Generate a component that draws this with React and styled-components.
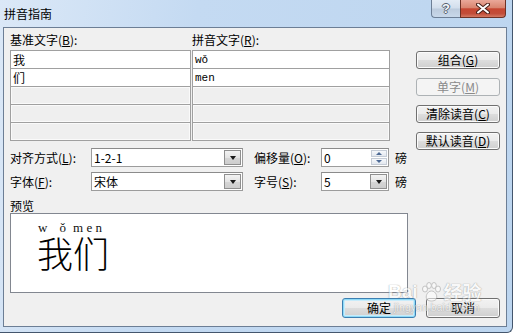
import React from "react";
import styled, { createGlobalStyle } from "styled-components";

const GlobalStyle = createGlobalStyle`
  html, body { margin: 0; padding: 0; background: #fff; }
  body {
    font-family: "Noto Sans CJK SC", "Liberation Sans", sans-serif;
    font-size: 12px;
    color: #000;
  }
  * { box-sizing: border-box; }
`;

const UI_FONT = `"Noto Sans CJK SC", "Liberation Sans", sans-serif`;

/* ── window chrome ─────────────────────────────────────────────── */
const Window = styled.div`
  position: relative;
  width: 513px;
  height: 333px;
  display: flex;
  flex-direction: column;
  padding: 0 5px 5px 3px;
  background: linear-gradient(100deg, #dbe8f7 0%, #c4daf2 35%, #bcd5ef 100%);
  border-right: 1px solid #44566d;
  border-bottom: 1px solid #44566d;
  border-bottom-right-radius: 6px;
`;

const TitleBar = styled.div`
  height: 27px;
  display: flex;
  align-items: flex-start;
`;

const Title = styled.div`
  align-self: center;
  padding-left: 1px;
  font-size: 12px;
  line-height: 16px;
  color: #000;
`;

const CaptionButtons = styled.div`
  margin-left: auto;
  margin-right: 1px;
  display: flex;
  height: 18px;
`;

const HelpButton = styled.div`
  width: 29px;
  height: 18px;
  border: 1px solid #6d7f96;
  border-top: none;
  border-right: none;
  border-bottom-left-radius: 4px;
  background: linear-gradient(#e3ebf5 0%, #d2deec 48%, #bccbdd 52%, #c8d8ea 100%);
  display: flex;
  align-items: center;
  justify-content: center;
  font: bold 13px/1 "Liberation Sans", sans-serif;
  color: #f4f7fb;
  text-shadow: 1px 0 #56606e, -1px 0 #56606e, 0 1px #56606e, 0 -1px #56606e;
`;

const CloseButton = styled.div`
  width: 46px;
  height: 18px;
  border: 1px solid #6e3226;
  border-top: none;
  border-bottom-right-radius: 4px;
  background: linear-gradient(#eaa899 0%, #d98570 45%, #c64631 52%, #c24d39 80%, #d37a64 100%);
  display: flex;
  align-items: center;
  justify-content: center;
`;

const Client = styled.div`
  flex: 1;
  display: flex;
  flex-direction: column;
  background: #f0f0f0;
  border: 1px solid #6c7e95;
  padding: 2px 6px 0 6px;
`;

/* ── main layout ───────────────────────────────────────────────── */
const Main = styled.div`
  display: grid;
  grid-template-columns: 400px 84px;
  column-gap: 6px;
`;

const LeftPane = styled.div`
  display: flex;
  flex-direction: column;
`;

const HeaderRow = styled.div`
  display: grid;
  grid-template-columns: 182px 1fr;
  height: 20px;
  align-items: center;
  line-height: 16px;
`;

const Table = styled.div`
  display: grid;
  grid-template-columns: 181px 198px;
  column-gap: 1px;
`;

const TableCol = styled.div`
  border: 1px solid #a0a0a0;
  display: flex;
  flex-direction: column;
`;

const Cell = styled.div`
  height: ${(p) => (p.$first ? 17 : 18)}px;
  border-top: ${(p) => (p.$first ? "none" : "1px solid #a0a0a0")};
  background: ${(p) => (p.$empty ? "#efefef" : "#fff")};
  box-shadow: ${(p) => (p.$empty ? "inset 0 0 0 1px #fafafa" : "none")};
  padding-left: 2px;
  display: flex;
  align-items: center;
  font-family: ${(p) => (p.$latin ? `"Liberation Mono", monospace` : UI_FONT)};
  font-size: ${(p) => (p.$latin ? 11 : 12)}px;
  line-height: 16px;
`;

const Controls = styled.div`
  margin-top: 7px;
  display: grid;
  grid-template-columns: 81px 152px 78px 68px auto;
  grid-auto-rows: 19px;
  row-gap: 5px;
  align-items: center;
  line-height: 16px;
`;

const Label = styled.div`
  padding-left: ${(p) => p.$indent || 0}px;
  white-space: nowrap;
`;

const Unit = styled.div`
  padding-left: 6px;
`;

const Field = styled.div`
  height: 19px;
  display: flex;
  background: #fff;
  border: 1px solid #9c9c9c;
  border-top-color: #8b8b8b;
`;

const FieldText = styled.div`
  flex: 1;
  padding-left: 2px;
  line-height: 17px;
  font-size: 12px;
`;

const DropButton = styled.div`
  width: 17px;
  margin: 1px;
  border: 1px solid #8f8f8f;
  background: linear-gradient(#f3f3f3 0%, #e4e4e4 50%, #d6d6d6 51%, #cdcdcd 100%);
  display: flex;
  align-items: center;
  justify-content: center;

  &::after {
    content: "";
    border-left: 3.5px solid transparent;
    border-right: 3.5px solid transparent;
    border-top: 4px solid #1a1a1a;
    margin-top: 1px;
  }
`;

const SpinBox = styled.div`
  width: 16px;
  margin: 1px;
  display: flex;
  flex-direction: column;
  gap: 1px;
`;

const SpinHalf = styled.div`
  flex: 1;
  background: linear-gradient(#f6f8fb, #e3e8ef);
  border: 1px solid #c5ccd6;
  display: flex;
  align-items: center;
  justify-content: center;

  &::after {
    content: "";
    border-left: 3px solid transparent;
    border-right: 3px solid transparent;
    ${(p) => (p.$up ? "border-bottom: 3px solid #4d6a95;" : "border-top: 3px solid #4d6a95;")}
  }
`;

const PreviewLabel = styled.div`
  height: 22px;
  padding-top: 6px;
  line-height: 17px;
`;

const PreviewBox = styled.div`
  width: 398px;
  height: 80px;
  background: #fff;
  border: 1px solid #828790;
  padding: 8px 0 0 26px;
  display: flex;
  align-items: flex-start;
`;

const RubyUnit = styled.div`
  width: 36px;
  display: flex;
  flex-direction: column;
`;

const Pinyin = styled.div`
  height: 12px;
  display: flex;
  justify-content: space-between;
  padding: 0 ${(p) => p.$pr}px 0 ${(p) => p.$pl}px;
  font: 13px/12px "Liberation Serif", serif;
  color: #111;
`;

const Han = styled.div`
  height: 36px;
  font-size: 36px;
  line-height: 36px;
  font-weight: 300;
  color: #000;
`;

const SideButtons = styled.div`
  padding-top: 21px;
  display: flex;
  flex-direction: column;
  gap: 9px;
`;

const Button = styled.button`
  width: ${(p) => p.$w}px;
  height: ${(p) => p.$h}px;
  padding: 0;
  border: 1px solid ${(p) => (p.$primary ? "#3c7fb1" : "#707070")};
  border-radius: 3px;
  background: linear-gradient(#f2f2f2 0%, #ebebeb 48%, #dddddd 52%, #cfcfcf 100%);
  box-shadow: ${(p) =>
    p.$primary ? "inset 0 0 0 1px #8fdaf7, inset 0 0 0 2px #c8ecfb" : "inset 0 0 0 1px #fbfbfb"};
  font-family: ${UI_FONT};
  font-size: 12px;
  line-height: 14px;
  color: #000;

  &:disabled {
    border-color: #adb2b5;
    background: #f4f4f4;
    color: #8a8a8a;
    box-shadow: none;
  }
`;

const Footer = styled.div`
  margin-top: 5px;
  display: flex;
  justify-content: flex-end;
  gap: 10px;
`;

/* ── baidu watermark laid over the corner ──────────────────────── */
const Watermark = styled.div`
  position: absolute;
  left: 388px;
  top: 282px;
  opacity: 0.55;
  pointer-events: none;
  display: flex;
  flex-direction: column;
  align-items: flex-start;
  color: #fff;
  text-shadow: 0 0 1px #777, 0 0 1px #777;
`;

const MarkTop = styled.div`
  display: flex;
  align-items: flex-end;
  gap: 2px;
  font: bold 19px/20px "Liberation Sans", sans-serif;
`;

const MarkHan = styled.span`
  font-family: ${UI_FONT};
`;

const MarkSub = styled.div`
  margin-left: 6px;
  font: 10px/11px "Liberation Sans", sans-serif;
  letter-spacing: 0.3px;
`;

const Acc = ({ k }) => (
  <>
    (<u>{k}</u>)
  </>
);

const Combo = ({ value }) => (
  <Field>
    <FieldText>{value}</FieldText>
    <DropButton />
  </Field>
);

const Spinner = ({ value }) => (
  <Field>
    <FieldText>{value}</FieldText>
    <SpinBox>
      <SpinHalf $up />
      <SpinHalf />
    </SpinBox>
  </Field>
);

const baseRows = ["我", "们", "", "", ""];
const rubyRows = ["wǒ", "men", "", "", ""];

export default function App() {
  return (
    <>
      <GlobalStyle />
      <Window>
        <TitleBar>
          <Title>拼音指南</Title>
          <CaptionButtons>
            <HelpButton>?</HelpButton>
            <CloseButton>
              <svg width="14" height="11" viewBox="0 0 14 11">
                <path d="M2 1.5 L12 9.5 M12 1.5 L2 9.5" stroke="#4a2019" strokeWidth="4" strokeLinecap="round" />
                <path d="M2 1.5 L12 9.5 M12 1.5 L2 9.5" stroke="#fff" strokeWidth="2" strokeLinecap="round" />
              </svg>
            </CloseButton>
          </CaptionButtons>
        </TitleBar>

        <Client>
          <Main>
            <LeftPane>
              <HeaderRow>
                <Label>
                  基准文字<Acc k="B" />:
                </Label>
                <Label>
                  拼音文字<Acc k="R" />:
                </Label>
              </HeaderRow>
              <Table>
                <TableCol>
                  {baseRows.map((t, i) => (
                    <Cell key={i} $first={i === 0} $empty={!t}>
                      {t}
                    </Cell>
                  ))}
                </TableCol>
                <TableCol>
                  {rubyRows.map((t, i) => (
                    <Cell key={i} $first={i === 0} $empty={!t} $latin>
                      {t}
                    </Cell>
                  ))}
                </TableCol>
              </Table>

              <Controls>
                <Label>
                  对齐方式<Acc k="L" />:
                </Label>
                <Combo value="1-2-1" />
                <Label $indent={11}>
                  偏移量<Acc k="O" />:
                </Label>
                <Spinner value="0" />
                <Unit>磅</Unit>

                <Label>
                  字体<Acc k="F" />:
                </Label>
                <Combo value="宋体" />
                <Label $indent={11}>
                  字号<Acc k="S" />:
                </Label>
                <Combo value="5" />
                <Unit>磅</Unit>
              </Controls>

              <PreviewLabel>预览</PreviewLabel>
              <PreviewBox>
                <RubyUnit>
                  <Pinyin $pl={1} $pr={7}>
                    <span>w</span>
                    <span>ǒ</span>
                  </Pinyin>
                  <Han>我</Han>
                </RubyUnit>
                <RubyUnit>
                  <Pinyin $pl={0} $pr={7}>
                    <span>m</span>
                    <span>e</span>
                    <span>n</span>
                  </Pinyin>
                  <Han>们</Han>
                </RubyUnit>
              </PreviewBox>
            </LeftPane>

            <SideButtons>
              <Button $w={84} $h={18}>
                组合<Acc k="G" />
              </Button>
              <Button $w={84} $h={18} disabled>
                单字<Acc k="M" />
              </Button>
              <Button $w={84} $h={18}>
                清除读音<Acc k="C" />
              </Button>
              <Button $w={84} $h={18}>
                默认读音<Acc k="D" />
              </Button>
            </SideButtons>
          </Main>

          <Footer>
            <Button $w={74} $h={20} $primary>
              确定
            </Button>
            <Button $w={74} $h={20}>
              取消
            </Button>
          </Footer>
        </Client>

        <Watermark>
          <MarkTop>
            <span>Bai</span>
            <svg width="22" height="20" viewBox="0 0 22 20">
              <g fill="#fff" stroke="#888" strokeWidth="0.8">
                <ellipse cx="5" cy="7" rx="2.5" ry="3" />
                <ellipse cx="9" cy="3.5" rx="2.3" ry="3" />
                <ellipse cx="14" cy="3.5" rx="2.3" ry="3" />
                <ellipse cx="18" cy="7" rx="2.5" ry="3" />
                <path d="M11.5 9 C7 9 5 15 7 17.5 C9 19.5 14 19.5 16 17.5 C18 15 16 9 11.5 9 Z" />
              </g>
            </svg>
            <MarkHan>经验</MarkHan>
          </MarkTop>
          <MarkSub>jingyan.baidu.com</MarkSub>
        </Watermark>
      </Window>
    </>
  );
}
